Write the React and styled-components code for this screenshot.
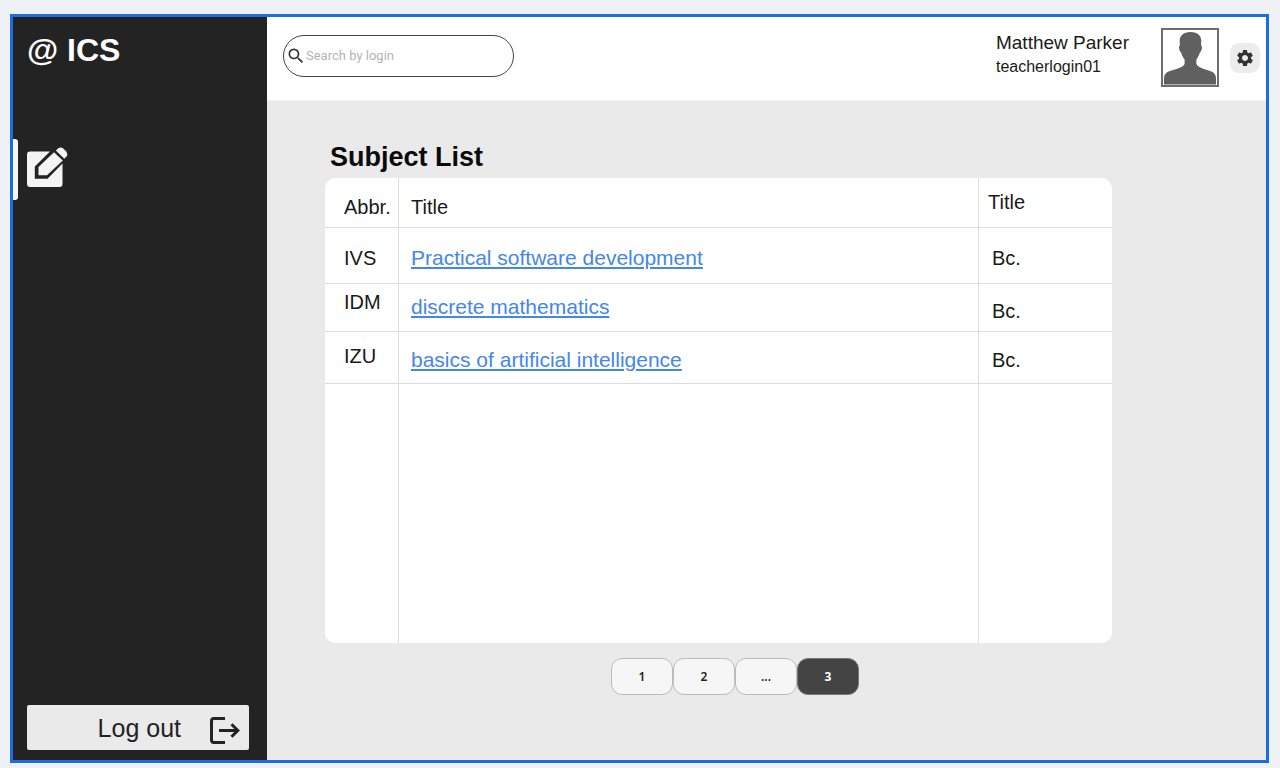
import React from "react";
import styled, { createGlobalStyle } from "styled-components";
import { MdSearch, MdSettings } from "react-icons/md";

const GlobalStyle = createGlobalStyle`
  *, *::before, *::after { box-sizing: border-box; }
  body {
    margin: 0;
    background: #eef1f5;
    color: #1a1a1a;
    font-family: "Liberation Sans", Arial, sans-serif;
  }
`;

const Page = styled.div`
  display: flex;
  min-height: 100vh;
  padding: 14px 11px 5px 10px;
`;

const Frame = styled.div`
  flex: 1;
  display: grid;
  grid-template-columns: 254px minmax(0, 1fr);
  border: 3px solid #1a6de3;
  background: #eaeaea;
`;

const Sidebar = styled.aside`
  display: flex;
  flex-direction: column;
  padding-bottom: 10px;
  background: #232323;
`;

const Brand = styled.div`
  padding: 14px 14px 0;
  color: #fff;
  font-size: 32px;
  font-weight: bold;
  line-height: 38px;
`;

const Nav = styled.nav`
  flex: 1;
  padding-top: 70px;
`;

const NavItem = styled.div`
  display: flex;
  height: 61px;

  &::before {
    content: "";
    width: 5px;
    border-radius: 0 3px 3px 0;
    background: #f7f7f7;
  }
`;

const NavLink = styled.a`
  display: block;
  padding: 8px 9px;
  color: #f4f4f4;
`;

const LogoutButton = styled.button`
  display: flex;
  align-items: center;
  justify-content: flex-end;
  gap: 28px;
  height: 45px;
  margin: 0 18px 0 14px;
  padding: 0 8px 0 0;
  border: 0;
  border-radius: 2px;
  background: #eaeaea;
  color: #232323;
  font: 25px/28px "Liberation Sans", Arial, sans-serif;
`;

const Content = styled.div`
  display: flex;
  flex-direction: column;
`;

const Header = styled.header`
  display: flex;
  justify-content: space-between;
  align-items: flex-start;
  height: 84px;
  padding: 11px 6px 0 16px;
  border-bottom: 1px solid #f3f3f3;
  background: #fff;
`;

const SearchBox = styled.label`
  display: flex;
  align-items: center;
  width: 231px;
  height: 42px;
  margin-top: 7px;
  padding-left: 2px;
  border: 1px solid #444;
  border-radius: 21px;
  color: #333;
`;

const SearchInput = styled.input`
  flex: 1;
  min-width: 0;
  padding: 0;
  border: 0;
  outline: 0;
  background: transparent;
  font: 13px/16px Roboto, sans-serif;

  &::placeholder { color: #b4b4b4; }
`;

const Account = styled.div`
  display: flex;
  align-items: flex-start;
`;

const UserText = styled.div`
  margin: 3px 32px 0 0;
`;

const UserName = styled.div`
  font-size: 19px;
  line-height: 24px;
`;

const UserLogin = styled.div`
  font-size: 16px;
  line-height: 24px;
`;

const Avatar = styled.div`
  display: flex;
  width: 58px;
  height: 59px;
  margin-right: 11px;
  border: 2px solid #706b6e;
  background: #fff;
`;

const SettingsButton = styled.button`
  display: flex;
  align-self: center;
  align-items: center;
  justify-content: center;
  width: 30px;
  height: 30px;
  padding: 0;
  border: 0;
  border-radius: 9px;
  background: #ececec;
  color: #333;
`;

const Main = styled.main`
  padding: 40px 154px 0 58px;
`;

const Heading = styled.h1`
  margin: 0;
  padding-left: 5px;
  color: #0a0a0a;
  font-size: 27px;
  line-height: 32px;
`;

const Card = styled.section`
  overflow: hidden;
  margin-top: 5px;
  border-radius: 11px;
  background: #fff;
`;

const Table = styled.table`
  width: 100%;
  table-layout: fixed;
  border-collapse: separate;
  border-spacing: 0;
  font-size: 20px;
  line-height: 24px;
`;

const Col = styled.col`
  width: ${(p) => p.$width || "auto"};
`;

const Row = styled.tr`
  height: ${(p) => p.$height}px;

  th, td {
    padding-top: ${(p) => p.$lead || 8}px;
  }

  &:last-child td { border-bottom: 0; }
`;

const Cell = styled.td`
  padding: 8px 0 8px 12px;
  border-bottom: 1px solid #dcdcdc;
  border-right: 1px solid #dcdcdc;
  vertical-align: ${(p) => p.$align || "middle"};
  text-align: left;
  font-weight: normal;
  white-space: nowrap;

  &:first-child { padding-left: 19px; }
  &:last-child { padding-left: 13px; border-right: 0; }
`;

const HeadCell = styled(Cell)`
  &:last-child { padding-left: 9px; }
`;

const SubjectLink = styled.a`
  color: #4487ea;
  font-size: 21px;
  text-decoration: underline;
  text-decoration-thickness: 2px;
  text-underline-offset: 2px;
`;

const Pagination = styled.nav`
  display: flex;
  justify-content: center;
  padding: 15px 0 0 33px;
`;

const PageButton = styled.button`
  width: 62px;
  height: 37px;
  padding: 0;
  border: 1px solid ${(p) => (p.$active ? "#777" : "#bdbdbd")};
  border-radius: 11px;
  background: ${(p) => (p.$active ? "#444" : "#f6f6f6")};
  color: ${(p) => (p.$active ? "#fff" : "#222")};
  font: ${(p) => (p.$active ? 700 : 600)} 12px/16px "Noto Sans", sans-serif;
`;

const EditIcon = () => (
  <svg width="41" height="41" viewBox="0 0 41 41" aria-hidden="true">
    <path
      fill="currentColor"
      d="M3 4.500H23L7.800 19.500V31.700H20.500L35.500 16.500V37Q35.500 40 32.500 40H3Q0 40 0 37V7.500Q0 4.500 3 4.500Z"
    />
    <path fill="currentColor" d="M27 5.200L35.800 13.500L20 28.200H11.500V20Z" />
    <path
      fill="currentColor"
      d="M28.800 3.600L31 1.500Q33.500 -0.500 36 1.300L39 4.300Q41.300 7.500 39.500 9.500L37.300 11.800Z"
    />
  </svg>
);

const LogoutIcon = () => (
  <svg width="32" height="32" viewBox="0 0 32 32" fill="none" stroke="currentColor" strokeWidth="3" aria-hidden="true">
    <path d="M16 6.500H5Q2.500 6.500 2.500 9V28Q2.500 30.500 5 30.500H16" />
    <path d="M10 18.500H28.500M22.500 12.200L28.800 18.500L22.500 24.800" />
  </svg>
);

const Silhouette = () => (
  <svg width="54" height="55" viewBox="0 0 55 55" fill="#606060" aria-hidden="true">
    <path d="M28 1.500C35.500 1.500 39.300 5.500 39 11.500L38.700 15C40.500 15.500 39.500 21.500 37.500 22.500C36.800 25.500 35.500 27.500 34 29.500V34C36 38.500 45 39.500 50 42C53 43.500 54 46 54 49V55H1V49C1 46 2 43.500 5 42C10 39.500 20 38.500 22 34V29.500C20.500 27.500 19.200 25.500 18.500 22.500C16.500 21.500 15.500 15.500 17.300 15L17 11.500C16.700 5.500 20.500 1.500 28 1.500Z" />
  </svg>
);

const subjects = [
  { abbr: "IVS", title: "Practical software development", degree: "Bc.", height: 56, lead: 12 },
  { abbr: "IDM", title: "discrete mathematics", degree: "Bc.", height: 48, lead: 6, abbrAlign: "top", degreeAlign: "bottom" },
  { abbr: "IZU", title: "basics of artificial intelligence", degree: "Bc.", height: 52, lead: 12, abbrAlign: "top" },
];

const pages = ["1", "2", "...", "3"];

export default function App() {
  return (
    <>
      <GlobalStyle />
      <Page>
        <Frame>
          <Sidebar>
            <Brand>@ ICS</Brand>
            <Nav aria-label="Main">
              <NavItem>
                <NavLink href="#subjects" aria-label="Subjects">
                  <EditIcon />
                </NavLink>
              </NavItem>
            </Nav>
            <LogoutButton type="button">
              <span>Log out</span>
              <LogoutIcon />
            </LogoutButton>
          </Sidebar>
          <Content>
            <Header>
              <SearchBox>
                <MdSearch size={20} aria-hidden="true" />
                <SearchInput type="text" placeholder="Search by login" aria-label="Search by login" />
              </SearchBox>
              <Account>
                <UserText>
                  <UserName>Matthew Parker</UserName>
                  <UserLogin>teacherlogin01</UserLogin>
                </UserText>
                <Avatar>
                  <Silhouette />
                </Avatar>
                <SettingsButton type="button" aria-label="Settings">
                  <MdSettings size={20} />
                </SettingsButton>
              </Account>
            </Header>
            <Main>
              <Heading>Subject List</Heading>
              <Card>
                <Table>
                  <colgroup>
                    <Col $width="74px" />
                    <Col />
                    <Col $width="133px" />
                  </colgroup>
                  <thead>
                    <Row $height={50} $lead={12}>
                      <HeadCell as="th" $align="bottom">Abbr.</HeadCell>
                      <HeadCell as="th" $align="bottom">Title</HeadCell>
                      <HeadCell as="th" $align="top">Title</HeadCell>
                    </Row>
                  </thead>
                  <tbody>
                    {subjects.map((s) => (
                      <Row key={s.abbr} $height={s.height} $lead={s.lead}>
                        <Cell $align={s.abbrAlign}>{s.abbr}</Cell>
                        <Cell>
                          <SubjectLink href={`#${s.abbr}`}>{s.title}</SubjectLink>
                        </Cell>
                        <Cell $align={s.degreeAlign}>{s.degree}</Cell>
                      </Row>
                    ))}
                    <Row $height={259}>
                      <Cell />
                      <Cell />
                      <Cell />
                    </Row>
                  </tbody>
                </Table>
              </Card>
              <Pagination aria-label="Pages">
                {pages.map((label) => (
                  <PageButton key={label} type="button" $active={label === "3"}>
                    {label}
                  </PageButton>
                ))}
              </Pagination>
            </Main>
          </Content>
        </Frame>
      </Page>
    </>
  );
}
